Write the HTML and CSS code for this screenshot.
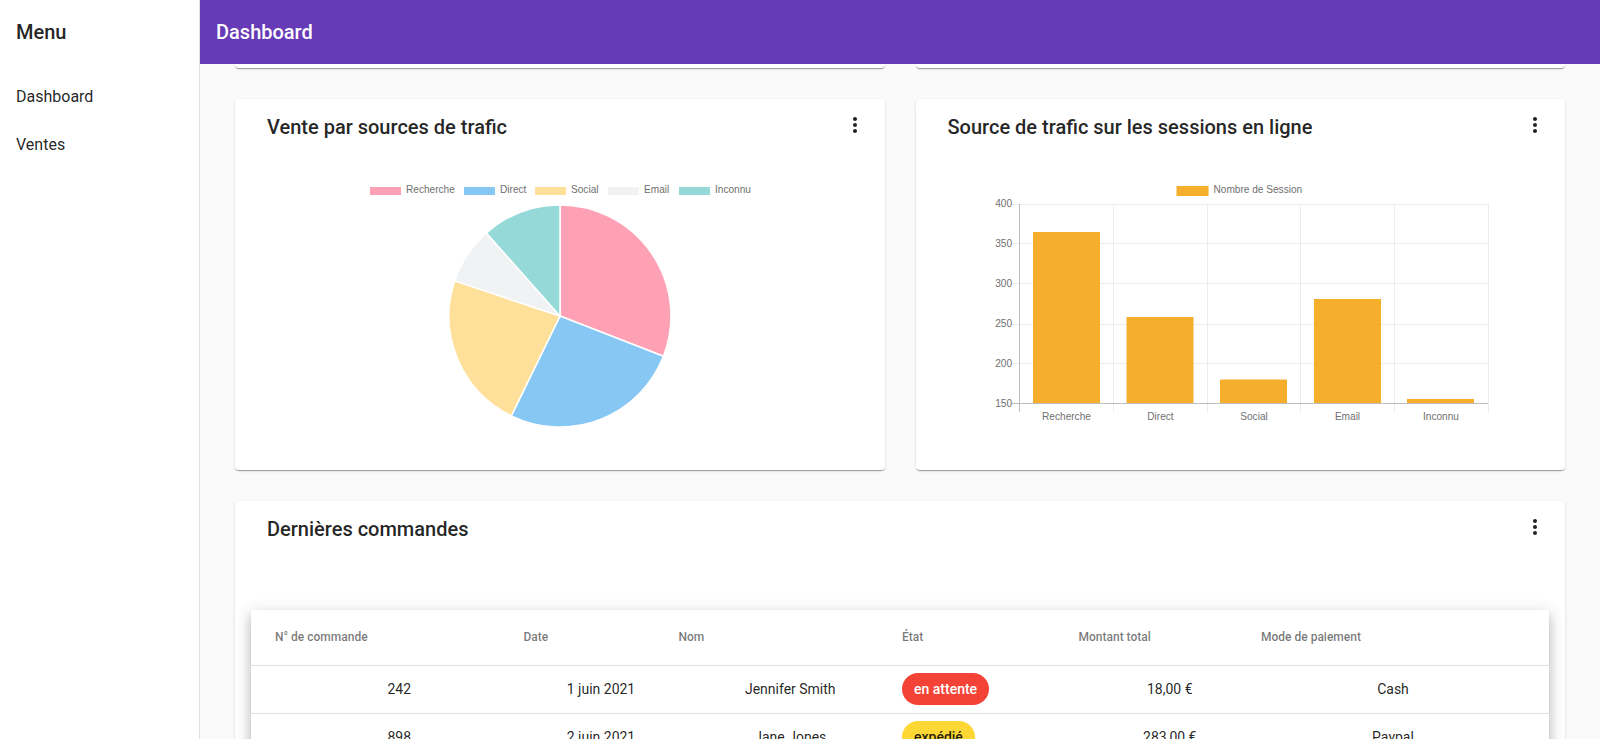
FILE: index.html
```html
<!DOCTYPE html>
<html lang="fr">
<head>
    <meta charset="UTF-8">
    <meta name="viewport" content="width=device-width, initial-scale=1.0">
    <title>Dashboard</title>
    <link rel="stylesheet" href="styles.css">
</head>
<body>
    <aside class="sidenav">
        <div class="sidenav-title">Menu</div>
        <nav class="sidenav-list">
            <a class="sidenav-link">Dashboard</a>
            <a class="sidenav-link">Ventes</a>
        </nav>
    </aside>
    <div class="page">
        <header class="topbar">Dashboard</header>
        <main class="content">
            <!-- previous row, scrolled under the toolbar -->
            <div class="card-row card-row-cut">
                <div class="card"></div>
                <div class="card"></div>
            </div>

            <div class="card-row">
                <section class="card">
                    <div class="card-header">
                        <h2 class="card-title">Vente par sources de trafic</h2>
                        <svg class="more-icon" viewBox="0 0 24 24"><path d="M12 8c1.1 0 2-.9 2-2s-.9-2-2-2-2 .9-2 2 .9 2 2 2zm0 2c-1.1 0-2 .9-2 2s.9 2 2 2 2-.9 2-2-.9-2-2-2zm0 6c-1.1 0-2 .9-2 2s.9 2 2 2 2-.9 2-2-.9-2-2-2z"/></svg>
                    </div>
                    <svg class="chart" viewBox="235 155 649.5 315">
                        <g class="chart-text">
                            <rect class="pie-pink" x="370" y="187" width="31" height="8"/>
                            <text x="406" y="193">Recherche</text>
                            <rect class="pie-blue" x="464" y="187" width="31" height="8"/>
                            <text x="500" y="193">Direct</text>
                            <rect class="pie-yellow" x="535" y="187" width="31" height="8"/>
                            <text x="571" y="193">Social</text>
                            <rect class="pie-grey" x="608" y="187" width="31" height="8"/>
                            <text x="644" y="193">Email</text>
                            <rect class="pie-teal" x="679" y="187" width="31" height="8"/>
                            <text x="715" y="193">Inconnu</text>
                        </g>
                        <g class="pie">
                            <path class="pie-pink" d="M560 316L560 205A111 111 0 0 1 663.4 356.3Z"/>
                            <path class="pie-blue" d="M560 316L663.4 356.3A111 111 0 0 1 511.3 415.8Z"/>
                            <path class="pie-yellow" d="M560 316L511.3 415.8A111 111 0 0 1 454.7 280.9Z"/>
                            <path class="pie-grey" d="M560 316L454.7 280.9A111 111 0 0 1 486.4 233.1Z"/>
                            <path class="pie-teal" d="M560 316L486.4 233.1A111 111 0 0 1 560 205Z"/>
                        </g>
                    </svg>
                </section>

                <section class="card">
                    <div class="card-header">
                        <h2 class="card-title">Source de trafic sur les sessions en ligne</h2>
                        <svg class="more-icon" viewBox="0 0 24 24"><path d="M12 8c1.1 0 2-.9 2-2s-.9-2-2-2-2 .9-2 2 .9 2 2 2zm0 2c-1.1 0-2 .9-2 2s.9 2 2 2 2-.9 2-2-.9-2-2-2zm0 6c-1.1 0-2 .9-2 2s.9 2 2 2 2-.9 2-2-.9-2-2-2z"/></svg>
                    </div>
                    <svg class="chart" viewBox="916 155 649.5 315">
                        <g class="grid">
                            <path d="M1012 204.5H1488M1012 243.5H1488M1012 283.5H1488M1012 324.5H1488M1012 363.5H1488"/>
                            <path d="M1113.5 204V412M1207.5 204V412M1300.5 204V412M1394.5 204V412M1488.5 204V412"/>
                        </g>
                        <path class="axis" d="M1019.5 204V412M1012 403.5H1488"/>
                        <g class="bars">
                            <rect x="1033" y="232" width="67" height="171"/>
                            <rect x="1126.500" y="317" width="67" height="86"/>
                            <rect x="1220" y="379.500" width="67" height="23.500"/>
                            <rect x="1314" y="299" width="67" height="104"/>
                            <rect x="1407" y="399" width="67" height="4"/>
                            <rect x="1176.500" y="186" width="32" height="10"/>
                        </g>
                        <g class="chart-text">
                            <text x="1213.500" y="193">Nombre de Session</text>
                        </g>
                        <g class="chart-text chart-text-end">
                            <text x="1012" y="206.500">400</text>
                            <text x="1012" y="246.500">350</text>
                            <text x="1012" y="286.500">300</text>
                            <text x="1012" y="327">250</text>
                            <text x="1012" y="366.500">200</text>
                            <text x="1012" y="406.500">150</text>
                        </g>
                        <g class="chart-text chart-text-mid">
                            <text x="1066.500" y="420">Recherche</text>
                            <text x="1160.500" y="420">Direct</text>
                            <text x="1254" y="420">Social</text>
                            <text x="1347.500" y="420">Email</text>
                            <text x="1441" y="420">Inconnu</text>
                        </g>
                    </svg>
                </section>
            </div>

            <section class="card card-orders">
                <div class="card-header">
                    <h2 class="card-title">Dernières commandes</h2>
                    <svg class="more-icon" viewBox="0 0 24 24"><path d="M12 8c1.1 0 2-.9 2-2s-.9-2-2-2-2 .9-2 2 .9 2 2 2zm0 2c-1.1 0-2 .9-2 2s.9 2 2 2 2-.9 2-2-.9-2-2-2zm0 6c-1.1 0-2 .9-2 2s.9 2 2 2 2-.9 2-2-.9-2-2-2z"/></svg>
                </div>
                <table class="orders">
                    <colgroup>
                        <col class="col-id">
                        <col class="col-date">
                        <col class="col-name">
                        <col class="col-state">
                        <col class="col-total">
                        <col>
                    </colgroup>
                    <thead>
                        <tr>
                            <th>N° de commande</th>
                            <th>Date</th>
                            <th>Nom</th>
                            <th>État</th>
                            <th>Montant total</th>
                            <th>Mode de paiement</th>
                        </tr>
                    </thead>
                    <tbody>
                        <tr>
                            <td>242</td>
                            <td>1 juin 2021</td>
                            <td>Jennifer Smith</td>
                            <td class="state-cell"><span class="badge badge-pending">en attente</span></td>
                            <td>18,00 €</td>
                            <td>Cash</td>
                        </tr>
                        <tr>
                            <td>898</td>
                            <td>2 juin 2021</td>
                            <td>Jane Jones</td>
                            <td class="state-cell"><span class="badge badge-shipped">expédié</span></td>
                            <td>283,00 €</td>
                            <td>Paypal</td>
                        </tr>
                    </tbody>
                </table>
            </section>
        </main>
    </div>
</body>
</html>
```

FILE: styles.css
```css
html, body {
    height: 100%;
}
body {
    font-family: Roboto, "Liberation Sans", sans-serif;
    font-size: 14px;
    margin: 0;
    display: flex;
    height: 739px;
    overflow: hidden;
    color: rgba(0, 0, 0, 0.87);
    background-color: #fafafa;
}
.sidenav {
    width: 199px;
    flex-shrink: 0;
    background-color: white;
    border-right: 1px solid #e0e0e0;
}
.sidenav-title {
    height: 64px;
    line-height: 64px;
    padding-left: 16px;
    font-size: 20px;
    font-weight: 500;
}
.sidenav-list {
    padding-top: 9px;
}
.sidenav-link {
    display: block;
    height: 48px;
    line-height: 48px;
    padding-left: 16px;
    font-size: 16px;
}
.page {
    flex-grow: 1;
    min-width: 0;
    display: flex;
    flex-direction: column;
}
.topbar {
    height: 64px;
    line-height: 64px;
    flex-shrink: 0;
    padding-left: 16px;
    font-size: 20px;
    font-weight: 500;
    color: white;
    background-color: #673ab7;
}
.content {
    flex-grow: 1;
    overflow: hidden;
    padding: 0 35px;
}
.card-row {
    display: grid;
    grid-template-columns: 1fr 1fr;
    gap: 31px;
    margin-bottom: 31px;
}
.card-row-cut {
    height: 4px;
}
.card-row-cut .card {
    border-radius: 0 0 4px 4px;
}
.card {
    background-color: white;
    border-radius: 4px;
    box-shadow: 0 2px 1px -1px rgba(0, 0, 0, 0.2), 0 1px 1px 0 rgba(0, 0, 0, 0.14), 0 1px 3px 0 rgba(0, 0, 0, 0.12);
}
.card-header {
    height: 56px;
    display: flex;
    justify-content: space-between;
    align-items: flex-start;
    box-sizing: border-box;
    padding: 14px 18px 0 32px;
}
.card-title {
    margin: 0;
    padding-top: 2px;
    font-size: 20px;
    line-height: 24px;
    font-weight: 500;
}
.more-icon {
    width: 24px;
    height: 24px;
    fill: rgba(0, 0, 0, 0.87);
}
.chart {
    display: block;
    width: 100%;
    height: 315px;
}
.chart-text {
    font-family: "Liberation Sans", Arial, sans-serif;
    font-size: 10.1px;
    fill: #707070;
}
.chart-text-end {
    text-anchor: end;
}
.chart-text-mid {
    text-anchor: middle;
}
.pie path {
    stroke: white;
    stroke-width: 1.5;
}
.pie-pink {
    fill: #ffa1b5;
}
.pie-blue {
    fill: #87c7f3;
}
.pie-yellow {
    fill: #fee09a;
}
.pie-grey {
    fill: #f1f2f4;
}
.pie-teal {
    fill: #95d9d9;
}
.grid path {
    fill: none;
    stroke: #ececec;
    stroke-width: 1;
}
.axis {
    fill: none;
    stroke: #bdbdbd;
    stroke-width: 1;
}
.bars rect {
    fill: #f6ae2d;
}
.card-orders {
    padding: 0 16px 16px;
}
.card-orders .card-header {
    margin: 0 -16px 53px;
}
.orders {
    width: 100%;
    table-layout: fixed;
    border-collapse: separate;
    border-spacing: 0;
    background-color: white;
    box-shadow: 0 5px 5px -3px rgba(0, 0, 0, 0.2), 0 8px 10px 1px rgba(0, 0, 0, 0.14), 0 3px 14px 2px rgba(0, 0, 0, 0.12);
}
.col-id {
    width: 272.5px;
}
.col-date {
    width: 155px;
}
.col-name {
    width: 223.5px;
}
.col-state {
    width: 176.5px;
}
.col-total {
    width: 182.5px;
}
.orders th {
    height: 54px;
    padding: 0 0 1px;
    text-align: left;
    font-size: 12px;
    font-weight: 500;
    color: rgba(0, 0, 0, 0.54);
    border-bottom: 1px solid #e0e0e0;
}
.orders td {
    height: 46px;
    padding: 0 0 1px;
    text-align: center;
    border-bottom: 1px solid #e0e0e0;
}
.orders th:first-child, .orders td:first-child {
    padding-left: 24px;
}
.orders th:last-child, .orders td:last-child {
    padding-right: 24px;
}
.orders td.state-cell {
    text-align: left;
}
.badge {
    display: inline-block;
    vertical-align: middle;
    height: 32px;
    line-height: 32px;
    padding: 0 12px;
    border-radius: 16px;
    font-weight: 500;
}
.badge-pending {
    color: white;
    background-color: #f44336;
}
.badge-shipped {
    background-color: #fdd835;
}
```
